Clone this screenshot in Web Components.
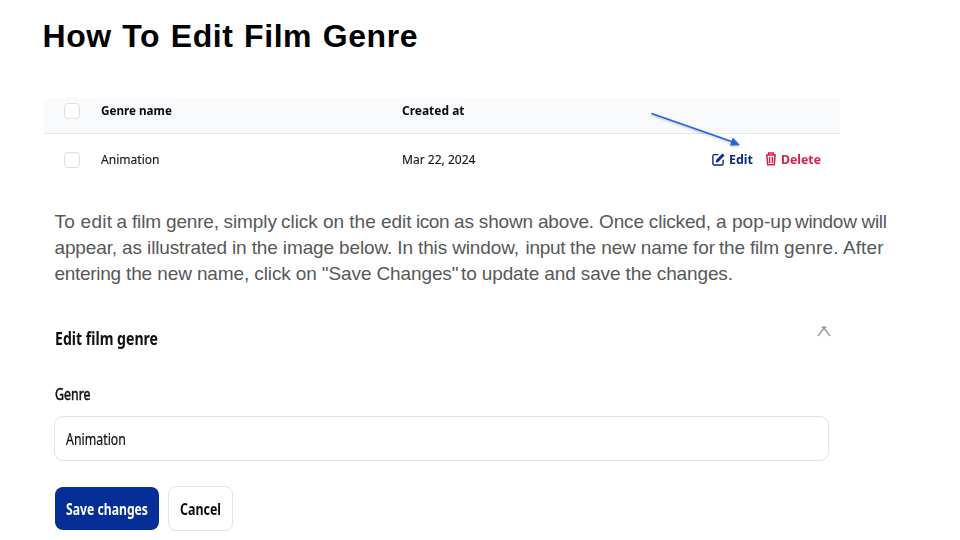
<!DOCTYPE html>
<html lang="en">
<head>
<meta charset="utf-8">
<title>How To Edit Film Genre</title>
<style>
html,body{margin:0;width:960px;height:540px;overflow:hidden;background:#fff}
</style>
</head>
<body>
<guide-slide></guide-slide>
<script>
// One line of text set to an exact measure, by tracking or by horizontal scale.
class FitText extends HTMLElement{
  connectedCallback(){
    const r=this.attachShadow({mode:'open'});
    r.innerHTML='<style>:host{display:block;flex:none;white-space:pre}span{display:inline-block;transform-origin:0 50%}</style><span><slot></slot></span>';
    const w=+this.getAttribute('w'),s=r.querySelector('span');
    this.style.width=w+'px';
    const nat=s.getBoundingClientRect().width;
    if(!nat)return;
    if(this.hasAttribute('track'))s.style.letterSpacing=((w-nat)/(this.textContent.length-1))+'px';
    else s.style.transform='scaleX('+(w/nat)+')';
  }
}
customElements.define('fit-text',FitText);

class CheckBox extends HTMLElement{
  constructor(){super();this.attachShadow({mode:'open'}).innerHTML='<style>:host{display:block;box-sizing:border-box;width:16px;height:16px;border:1px solid #dedfe3;border-radius:4px;background:#fff}</style>';}
}
customElements.define('check-box',CheckBox);

class TableRow extends HTMLElement{
  constructor(){super();this.attachShadow({mode:'open'}).innerHTML=`<style>
  :host{display:grid;grid-template-columns:36.5px 301.5px 309.5px 1fr;align-items:start;box-sizing:border-box;padding-left:20px;font:13px/20px "Noto Sans",sans-serif;color:#16181d}
  :host([head]){height:36px;padding-top:2px;background:#f8fafc;border-bottom:1px solid #e6e7ea;font-weight:700;color:#08090c}
  :host(:not([head])){height:50px;padding-top:15px;-webkit-text-stroke:.15px #16181d}
  check-box{margin-top:3px}
  </style><check-box></check-box><slot></slot>`;}
}
customElements.define('table-row',TableRow);

class RowAction extends HTMLElement{
  constructor(){super();this.attachShadow({mode:'open'}).innerHTML=`<style>
  :host{display:flex;align-items:center;font-weight:700;gap:4px;-webkit-text-stroke:0}
  ::slotted(svg){display:block;flex:none}
  </style><slot name="icon"></slot><slot></slot>`;}
}
customElements.define('row-action',RowAction);

class GenreTable extends HTMLElement{
  constructor(){super();this.attachShadow({mode:'open'}).innerHTML=`<style>
  :host{display:block;position:relative;width:796px;height:86px}
  .acts{display:flex;gap:12px}
  .edit{color:#0b2a85}.del{color:#d9204c}
  .arrow{position:absolute;left:600px;top:8px;overflow:visible;filter:drop-shadow(0 1px 1px rgba(0,0,0,.25))}
  </style>
  <table-row head><fit-text w="71">Genre name</fit-text><fit-text w="62.5">Created at</fit-text></table-row>
  <table-row><fit-text w="58.5">Animation</fit-text><fit-text w="73.5">Mar 22, 2024</fit-text>
   <div class="acts">
    <row-action class="edit"><svg slot="icon" width="13" height="13" viewBox="0 0 13 13" fill="none" stroke="currentColor" stroke-width="1.4"><path d="M6.5 1.6H2.2Q.9 1.6.9 2.9V10.7Q.9 12 2.2 12H9.8Q11.1 12 11.1 10.7V6.8"/><path d="M4 9.3L4.4 7L10.5.7L12.2 2.4L6.2 8.8Z" fill="currentColor" stroke-width=".5"/></svg><fit-text w="24">Edit</fit-text></row-action>
    <row-action class="del"><svg slot="icon" width="12" height="14" viewBox="0 0 12 14" fill="none" stroke="currentColor" stroke-width="1.5"><path d="M.9 3.1H11.1M3.7 3V1.1H8.3V3M1.9 3.2L2.7 12.8H9.3L10.1 3.2M4.6 5V11M7.4 5V11"/></svg><fit-text w="40">Delete</fit-text></row-action>
   </div></table-row>
  <svg class="arrow" width="100" height="45" viewBox="0 0 100 45"><path d="M7.5 7.5L89 36" stroke="#1f66e5" stroke-width="1.8"/><path d="M96 39.3L86 39.6L88.8 31.6Z" fill="#1f66e5"/></svg>`;}
}
customElements.define('genre-table',GenreTable);

class TextLines extends HTMLElement{
  constructor(){super();
    // [text, left edge, right edge] of each run, measured from the page edge
    const lines=[
     [['To edit ',54.5,112],['a film genre, ',116.5,219],['simply ',223.5,277],['click on the edit ',281,411.5],['icon ',416,449.5],['as shown above. Once clicked, ',454,711],['a pop-up ',716,791.5],['window will',795,887]],
     [['appear, as illustrated in the image below. In this window, ',54.5,519],['input ',525.5,565.5],['the new name for ',570,715],['the film ',719,779],['genre. After',784,883.5]],
     [['entering ',54.5,121],['the new name, click on "Save Changes" ',126,458.5],['to update and save the changes.',461,733]]];
    let h='<style>:host{display:block;width:860px;font:19px/26px "Liberation Sans",Arial,sans-serif;color:#58585a}div{display:flex;height:26px}</style>';
    for(const l of lines){let x=54;h+='<div>';
      for(const [t,a,b] of l){h+='<fit-text track w="'+(b-a)+'" style="margin-left:'+(a-x)+'px">'+t.trim()+'</fit-text>';x=b;}
      h+='</div>';}
    this.attachShadow({mode:'open'}).innerHTML=h;}
}
customElements.define('text-lines',TextLines);

class UiButton extends HTMLElement{
  constructor(){super();this.attachShadow({mode:'open'}).innerHTML=`<style>
  :host{display:flex;align-items:center;justify-content:center;box-sizing:border-box;height:45px;width:65px;border:1px solid #e2e2e5;border-radius:8px;background:#fff;color:#0a0b0e;font:700 16px/22px "Noto Sans",sans-serif}
  :host([primary]){width:103.5px;height:43px;margin-top:1px;border:0;background:#042e96;color:#fff}
  </style><slot></slot>`;}
}
customElements.define('ui-button',UiButton);

class EditForm extends HTMLElement{
  constructor(){super();this.attachShadow({mode:'open'}).innerHTML=`<style>
  :host{display:block;width:777px;font:16px/22px "Noto Sans",sans-serif;color:#0d0e12}
  header{display:flex;justify-content:space-between;font-weight:700;font-size:18px;line-height:24px;height:24px}
  header svg{display:block}
  .label{margin:33px 0 0 1px;-webkit-text-stroke:.5px #0d0e12}
  .field{box-sizing:border-box;width:774.5px;height:45px;margin-top:11px;padding:11px 0 0 10.5px;border:1px solid #e2e2e5;border-radius:9px;-webkit-text-stroke:.2px #0d0e12}
  .buttons{display:flex;gap:9.5px;margin:25px 0 0 1px}
  </style>
  <header><fit-text w="103" style="margin-left:1px">Edit film genre</fit-text><svg width="14" height="12" viewBox="0 0 14 12" fill="none" stroke="#9297a0" stroke-width="1.4"><path d="M1 10.2L7 2L13 10.2M4.7 1.2H9.3"/></svg></header>
  <fit-text class="label" w="35.5">Genre</fit-text>
  <div class="field"><fit-text w="60">Animation</fit-text></div>
  <div class="buttons"><ui-button primary><fit-text w="82">Save changes</fit-text></ui-button><ui-button><fit-text w="41">Cancel</fit-text></ui-button></div>`;}
}
customElements.define('edit-form',EditForm);

class GuideSlide extends HTMLElement{
  constructor(){super();this.attachShadow({mode:'open'}).innerHTML=`<style>
  :host{display:flex;flex-direction:column;box-sizing:border-box;width:960px;height:540px;padding:17px 0 0 44px;background:#fff}
  h1{margin:0 0 0 -1.5px;height:81px;font:700 32px/38px "Liberation Sans",Arial,sans-serif;word-spacing:1px;color:#000}
  text-lines{margin:25px 0 0 10px}
  edit-form{margin:39px 0 0 10px}
  </style>
  <h1><fit-text track w="375">How To Edit Film Genre</fit-text></h1>
  <genre-table></genre-table>
  <text-lines></text-lines>
  <edit-form></edit-form>`;}
}
customElements.define('guide-slide',GuideSlide);
</script>
</body>
</html>
